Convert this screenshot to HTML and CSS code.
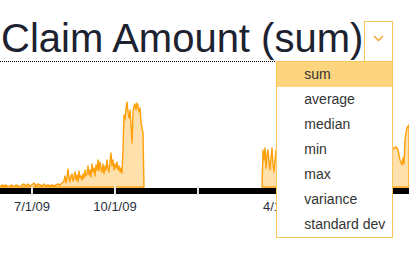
FILE: index.html
```html
<!DOCTYPE html>
<html lang="en">
<head>
    <meta charset="UTF-8">
    <meta name="viewport" content="width=device-width, initial-scale=1.0">
    <title>Claim Amount</title>
    <link rel="stylesheet" href="styles.css">
</head>
<body>
    <div id="panel">
        <div class="header">
            <div class="title">Claim Amount (sum)</div>
            <div class="picker">
                <div class="picker-btn">
                    <svg width="11" height="7" viewBox="0 0 11 7"><polyline points="1,1 5.5,5.5 10,1" fill="none" stroke="#f2a631" stroke-width="1.5"/></svg>
                </div>
                <ul class="menu">
                    <li class="active">sum</li>
                    <li>average</li>
                    <li>median</li>
                    <li>min</li>
                    <li>max</li>
                    <li>variance</li>
                    <li>standard dev</li>
                </ul>
            </div>
        </div>
        <svg class="chart" width="409" height="194" viewBox="0 62 409 194">
            <path class="area" d="M0,187 L2,185 4,186 6,185 8,187 10,186 12,185 14,187 16,185 18,186 20,187 22,185 24,184 26,186 28,184 30,186 32,185 34,183 36,186 38,184 40,185 42,186 44,184 46,186 48,185 50,186 52,185 54,186 56,185 58,184 60,185 62,183 64,181 65,176 66,183 67,178 68,169 69,178 70,182 71,176 72,174 73,181 74,177 75,172 76,180 77,175 78,182 79,171 80,178 81,176 82,180 83,174 84,178 85,170 86,176 87,174 88,166 89,175 90,170 91,177 92,164 93,172 94,168 95,176 96,165 97,170 98,160 99,171 100,162 101,168 102,172 103,164 104,174 105,166 106,170 107,160 108,168 109,172 110,162 111,153 112,166 113,160 114,170 115,164 116,168 117,162 118,170 119,166 120,172 121,168 122,173 123,150 124,115 125,120 126,108 127,102 128,112 129,118 130,110 131,125 132,143 133,112 134,106 135,104 136,110 137,103 138,106 139,112 140,108 141,122 142,128 143,133 144,187 Z"/>
            <path class="area" d="M262,187 L263,150 264,160 265,148 266,168 267,155 268,150 269,162 270,170 271,158 272,148 273,165 274,172 275,160 276,150 277,162 278,168 279,160 285,150 295,140 300,187 Z"/>
            <path class="area" d="M385,187 L390,150 396,147 398,150 400,160 402,165 403,158 404,164 405,140 406,133 407,128 409,125 409,187 Z"/>

            <rect class="axis" x="0" y="188" width="409" height="6"/>
            <rect class="gap" x="31" y="186" width="2" height="9"/>
            <rect class="gap" x="114" y="186" width="2" height="9"/>
            <rect class="gap" x="197" y="186" width="2" height="9"/>
            <rect class="gap" x="280" y="186" width="2" height="9"/>
            <line class="tick" x1="32" y1="186" x2="32" y2="195"/>
            <line class="tick" x1="115" y1="186" x2="115" y2="195"/>
            <line class="tick" x1="198" y1="186" x2="198" y2="195"/>

            <text class="label" x="32" y="211">7/1/09</text>
            <text class="label" x="115" y="211">10/1/09</text>
            <text class="label" x="281" y="211">4/1/10</text>
        </svg>
    </div>
</body>
</html>
```

FILE: styles.css
```css
body {
    margin: 0;
    background-color: #fff;
    font-family: "Liberation Sans", Arial, sans-serif;
    overflow: hidden;
}

#panel {
    width: 409px;
    height: 256px;
}

.header {
    display: flex;
    align-items: flex-end;
    height: 62px;
}

.title {
    font-size: 40px;
    line-height: 44px;
    color: #1c2230;
    padding-left: 1px;
    padding-bottom: 1px;
    border-bottom: 1px dotted #000;
    flex: none;
}

.picker {
    position: relative;
    margin-left: 1px;
    margin-bottom: 1px;
    z-index: 2;
}

.picker-btn {
    box-sizing: border-box;
    width: 29px;
    height: 40px;
    border: 1px solid #f8c65a;
    border-bottom: none;
    background-color: #fff;
    display: flex;
    justify-content: center;
    align-items: flex-start;
    padding-top: 13px;
}

.menu {
    position: absolute;
    top: 100%;
    right: 0;
    box-sizing: border-box;
    width: 117px;
    margin: 0;
    padding: 0;
    list-style: none;
    background-color: #fff;
    border: 1px solid #f8c65a;
}

.menu li {
    height: 25px;
    line-height: 25px;
    padding-left: 27px;
    font-size: 14px;
    color: #333;
}

.menu li.active {
    background-color: #fdd57e;
}

.chart {
    display: block;
}

.area {
    fill: #fee0ad;
    stroke: #ffa00a;
    stroke-width: 1.4;
    stroke-linejoin: round;
}

.axis {
    fill: #000;
}

.gap {
    fill: #fff;
}

.tick {
    stroke: #c8c8c8;
    stroke-width: 1;
}

.label {
    font-family: "Liberation Sans", Arial, sans-serif;
    font-size: 13px;
    fill: #2b2f40;
    text-anchor: middle;
}
```
